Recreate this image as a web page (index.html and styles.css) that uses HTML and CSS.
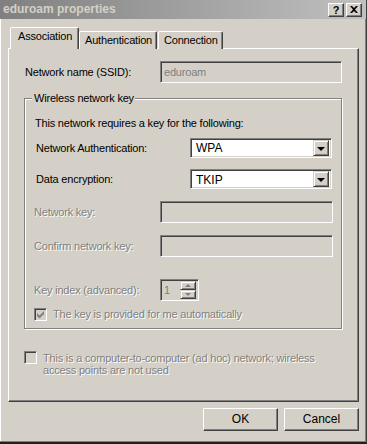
FILE: index.html
```html
<!DOCTYPE html>
<html>
<head>
<meta charset="utf-8">
<link rel="stylesheet" href="styles.css">
</head>
<body>
<div class="win">
  <div class="titlebar">
    <span class="title">eduroam properties</span>
    <div class="tbtns">
      <span class="tbtn help">?</span>
      <span class="tbtn close"><svg width="8" height="7" viewBox="0 0 8 7"><path d="M0 0h2l2 2 2-2h2L5 3.5 8 7H6L4 5 2 7H0l3-3.5z" fill="#000"/></svg></span>
    </div>
  </div>
  <div class="client">
    <div class="tabs">
      <div class="tab sel">Association</div>
      <div class="tab">Authentication</div>
      <div class="tab">Connection</div>
    </div>
    <div class="panel">
      <div class="row ssid">
        <span class="lbl lbl-ssid">Network name (SSID):</span>
        <div class="edit dis w-ssid"><span class="dtext">eduroam</span></div>
      </div>
      <div class="group">
        <span class="legend">Wireless network key</span>
        <div class="info">This network requires a key for the following:</div>
        <div class="row r-auth">
          <span class="lbl lbl-sel">Network Authentication:</span>
          <div class="combo"><span class="ctext">WPA</span><span class="cbtn"><i class="arrow"></i></span></div>
        </div>
        <div class="row r-enc">
          <span class="lbl lbl-sel">Data encryption:</span>
          <div class="combo"><span class="ctext">TKIP</span><span class="cbtn"><i class="arrow"></i></span></div>
        </div>
        <div class="row r-key">
          <span class="lbl lbl-key dlbl">Network key:</span>
          <div class="edit dis w-key"></div>
        </div>
        <div class="row r-conf">
          <span class="lbl lbl-key dlbl">Confirm network key:</span>
          <div class="edit dis w-key"></div>
        </div>
        <div class="row r-idx">
          <span class="lbl lbl-key dlbl">Key index (advanced):</span>
          <div class="edit dis spin">
            <span class="dtext">1</span>
            <div class="updown">
              <span class="ud"><i class="tri up"></i></span>
              <span class="ud"><i class="tri down"></i></span>
            </div>
          </div>
        </div>
        <div class="row r-auto">
          <span class="chk"><svg width="7" height="7" viewBox="0 0 7 7"><path d="M0 2v3l2 2h1l4-4V0L2.5 4.5z" fill="#808080"/></svg></span>
          <span class="dlbl chk-lbl">The key is provided for me automatically</span>
        </div>
      </div>
      <div class="row adhoc">
        <span class="chk"></span>
        <span class="dlbl adhoc-lbl">This is a computer-to-computer (ad hoc) network; wireless<br>access points are not used</span>
      </div>
    </div>
    <div class="buttons">
      <span class="btn">OK</span>
      <span class="btn">Cancel</span>
    </div>
  </div>
</div>
</body>
</html>
```

FILE: styles.css
```css
* { box-sizing: border-box; }
html, body { margin: 0; padding: 0; }
body {
  width: 367px;
  height: 444px;
  overflow: hidden;
  background: #d4d0c8;
  font-family: "Liberation Sans", Arial, sans-serif;
  font-size: 11px;
  line-height: 13px;
  letter-spacing: -0.2px;
  color: #000;
}
.win {
  width: 367px;
  height: 444px;
  display: flex;
  flex-direction: column;
  background: #d4d0c8;
  border-right: 1px solid #404040;
  border-bottom: 2px solid #202020;
  box-shadow: inset -1px -1px 0 #808080, inset 1px 0 0 #fff;
}
.titlebar {
  height: 19px;
  flex: none;
  display: flex;
  align-items: center;
  justify-content: space-between;
  background: linear-gradient(to right, #808080, #c0c0c0);
  padding: 0 4px 0 3px;
}
.title {
  color: #d4d0c8;
  font-family: "Liberation Sans", Arial, sans-serif;
  font-weight: bold;
  font-size: 12px;
  letter-spacing: 0;
}
.tbtns { display: flex; gap: 2px; }
.tbtn {
  width: 16px;
  height: 14px;
  display: flex;
  align-items: center;
  justify-content: center;
  background: #d4d0c8;
  border: 1px solid;
  border-color: #fff #404040 #404040 #fff;
  box-shadow: inset -1px -1px 0 #808080;
  font-weight: bold;
  font-size: 11px;
  line-height: 12px;
}
.client {
  flex: 1;
  display: flex;
  flex-direction: column;
  padding: 9px 0 0 8px;
}
.tabs {
  display: flex;
  align-items: flex-end;
  height: 21px;
  padding-left: 2px;
  margin-bottom: -1px;
  position: relative;
  z-index: 1;
}
.tab {
  height: 18px;
  padding: 0 4px 0 5px;
  display: flex;
  align-items: center;
  border: 1px solid;
  border-bottom: none;
  border-color: #fff #404040 transparent #fff;
  box-shadow: inset -1px 0 0 #808080;
  border-radius: 2px 2px 0 0;
  background: #d4d0c8;
  margin-left: 1px;
}
.tab.sel {
  height: 22px;
  padding: 0 6px 4px 7px;
  margin-left: 0;
  margin-right: -1px;
}
.panel {
  width: 351px;
  height: 354px;
  flex: none;
  border: 1px solid;
  border-color: #fff #404040 #404040 #fff;
  box-shadow: inset -1px -1px 0 #808080;
  display: flex;
  flex-direction: column;
}
.row { display: flex; align-items: center; }
.lbl { flex: none; }
.ssid { margin-top: 12px; padding-left: 16px; height: 22px; }
.lbl-ssid { width: 135px; }
.edit {
  height: 22px;
  border: 1px solid;
  border-color: #808080 #fff #fff #808080;
  box-shadow: inset 1px 1px 0 #404040, inset -1px -1px 0 #d4d0c8;
  background: #fff;
  display: flex;
  align-items: center;
}
.edit.dis { background: #d4d0c8; }
.w-ssid { width: 182px; }
.dtext { color: #808080; padding-left: 3px; }
.group {
  margin: 15px 0 0 15px;
  width: 318px;
  border: 1px solid #808080;
  box-shadow: 1px 1px 0 #fff, inset 1px 1px 0 #fff;
  display: flex;
  flex-direction: column;
  padding-bottom: 7px;
}
.legend {
  align-self: flex-start;
  margin: -7px 0 0 7px;
  padding: 0 1px 0 2px;
  background: #d4d0c8;
}
.info { margin: 12px 0 0 10px; }
.r-auth { margin-top: 8px; height: 20px; padding-left: 11px; }
.r-enc { margin-top: 11px; height: 20px; padding-left: 11px; }
.lbl-sel { width: 154px; }
.combo {
  width: 142px;
  height: 20px;
  border: 1px solid;
  border-color: #808080 #fff #fff #808080;
  box-shadow: inset 1px 1px 0 #404040, inset -1px -1px 0 #d4d0c8;
  background: #fff;
  display: flex;
  align-items: center;
  justify-content: space-between;
  padding: 2px;
}
.ctext { padding-left: 3px; line-height: 14px; font-size: 12px; letter-spacing: 0; }
.r-enc .ctext { padding-top: 2px; }
.cbtn {
  width: 16px;
  height: 16px;
  background: #d4d0c8;
  border: 1px solid;
  border-color: #d4d0c8 #404040 #404040 #d4d0c8;
  box-shadow: inset 1px 1px 0 #fff, inset -1px -1px 0 #808080;
  display: flex;
  align-items: center;
  justify-content: center;
}
.arrow {
  width: 0; height: 0;
  border-left: 4px solid transparent;
  border-right: 4px solid transparent;
  border-top: 4px solid #000;
  margin-top: 1px;
}
.dlbl { color: #808080; text-shadow: 1px 1px 0 #fff; }
.r-key { margin-top: 12px; height: 22px; padding-left: 9px; }
.r-conf { margin-top: 12px; height: 22px; padding-left: 9px; }
.r-idx { margin-top: 22px; height: 22px; padding-left: 9px; }
.lbl-key { width: 126px; }
.w-key { width: 173px; }
.spin { width: 39px; justify-content: space-between; padding: 2px; }
.spin .dtext { padding-left: 1px; }
.updown { display: flex; flex-direction: column; width: 16px; height: 18px; }
.ud {
  flex: 1;
  background: #d4d0c8;
  border: 1px solid;
  border-color: #d4d0c8 #404040 #404040 #d4d0c8;
  box-shadow: inset 1px 1px 0 #fff, inset -1px -1px 0 #808080;
  display: flex;
  align-items: center;
  justify-content: center;
}
.tri { width: 0; height: 0; border-left: 3px solid transparent; border-right: 3px solid transparent; }
.tri.up { border-bottom: 3px solid #808080; }
.tri.down { border-top: 3px solid #808080; }
.r-auto { margin-top: 7px; height: 13px; padding-left: 9px; }
.chk {
  width: 13px;
  height: 13px;
  flex: none;
  border: 1px solid;
  border-color: #808080 #fff #fff #808080;
  box-shadow: inset 1px 1px 0 #404040, inset -1px -1px 0 #d4d0c8;
  background: #d4d0c8;
  display: flex;
  align-items: center;
  justify-content: center;
}
.chk-lbl { margin-left: 6px; }
.adhoc { margin: 22px 0 0 15px; align-items: flex-start; }
.adhoc-lbl { margin: 1px 0 0 6px; line-height: 12px; }
.buttons {
  display: flex;
  justify-content: flex-end;
  gap: 6px;
  margin-top: 6px;
  width: 351px;
}
.btn {
  width: 75px;
  height: 23px;
  display: flex;
  align-items: center;
  justify-content: center;
  border: 1px solid;
  border-color: #fff #404040 #404040 #fff;
  box-shadow: inset -1px -1px 0 #808080;
  font-size: 12px;
  letter-spacing: 0;
}
```
